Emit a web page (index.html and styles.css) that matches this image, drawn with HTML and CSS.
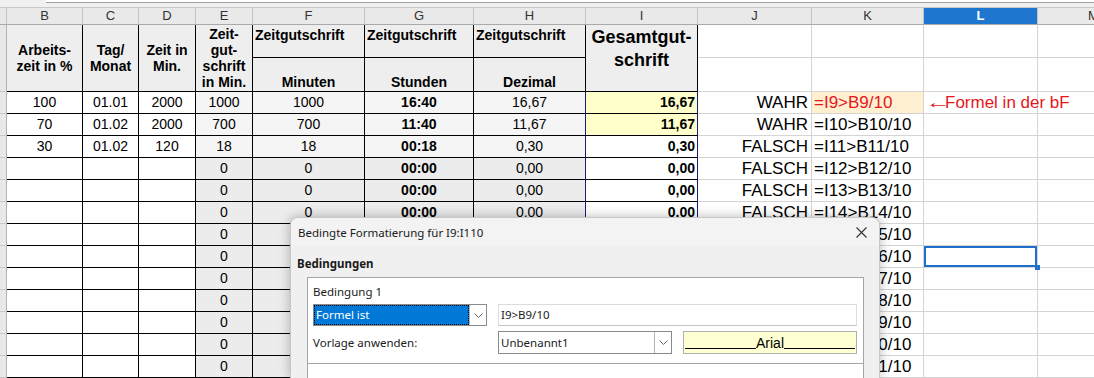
FILE: index.html
```html
<!DOCTYPE html>
<html lang="de">
  <head>
    <meta charset="UTF-8" />
    <title>Zeitgutschrift - Bedingte Formatierung</title>
    <link rel="stylesheet" href="styles.css">
  </head>
  <body>
    <div class="topbar"><div class="field"></div></div>

    <div class="sheet">
      <!-- Column letters -->
      <div class="colhead">
        <div class="rh"></div>
        <div>B</div><div>C</div><div>D</div><div>E</div><div>F</div><div>G</div>
        <div>H</div><div>I</div><div>J</div><div>K</div><div class="active">L</div><div>M</div>
      </div>

      <!-- Table header (two rows) -->
      <div class="head">
        <div class="rh span"></div>
        <div class="hc span mid">Arbeits-<br>zeit in %</div>
        <div class="hc span mid">Tag/<br>Monat</div>
        <div class="hc span mid">Zeit in<br>Min.</div>
        <div class="hc span mid">Zeit-<br>gut-<br>schrift<br>in Min.</div>
        <div class="hc top">Zeitgutschrift</div>
        <div class="hc top">Zeitgutschrift</div>
        <div class="hc top">Zeitgutschrift</div>
        <div class="hc span big">Gesamtgut-<br>schrift</div>
        <div class="gc"></div><div class="gc"></div><div class="gc"></div><div class="gc"></div>
        <div class="hc bottom">Minuten</div>
        <div class="hc bottom">Stunden</div>
        <div class="hc bottom">Dezimal</div>
        <div class="gc"></div><div class="gc"></div><div class="gc"></div><div class="gc"></div>
      </div>

      <!-- Data rows 9..21 -->
      <div class="row hi">
        <div class="rh"></div><div>100</div><div>01.01</div><div>2000</div>
        <div class="gs">1000</div><div class="gs">1000</div><div class="gs b">16:40</div><div class="gs hx">16,67</div>
        <div class="tot">16,67</div><div class="j">WAHR</div><div class="k mark">=I9&gt;B9/10</div>
        <div class="l note"><span class="arrow-l">&larr;</span>Formel in der bF</div><div class="m"></div>
      </div>
      <div class="row hi">
        <div class="rh"></div><div>70</div><div>01.02</div><div>2000</div>
        <div class="gs">700</div><div class="gs">700</div><div class="gs b">11:40</div><div class="gs hx">11,67</div>
        <div class="tot">11,67</div><div class="j">WAHR</div><div class="k">=I10&gt;B10/10</div>
        <div class="l"></div><div class="m"></div>
      </div>
      <div class="row">
        <div class="rh"></div><div>30</div><div>01.02</div><div>120</div>
        <div class="gs">18</div><div class="gs">18</div><div class="gs b">00:18</div><div class="gs hx">0,30</div>
        <div class="tot">0,30</div><div class="j">FALSCH</div><div class="k">=I11&gt;B11/10</div>
        <div class="l"></div><div class="m"></div>
      </div>
      <div class="row low">
        <div class="rh"></div><div></div><div></div><div></div>
        <div class="gs">0</div><div class="gs">0</div><div class="gs b">00:00</div><div class="gs hx">0,00</div>
        <div class="tot">0,00</div><div class="j">FALSCH</div><div class="k">=I12&gt;B12/10</div>
        <div class="l"></div><div class="m"></div>
      </div>
      <div class="row low">
        <div class="rh"></div><div></div><div></div><div></div>
        <div class="gs">0</div><div class="gs">0</div><div class="gs b">00:00</div><div class="gs hx">0,00</div>
        <div class="tot">0,00</div><div class="j">FALSCH</div><div class="k">=I13&gt;B13/10</div>
        <div class="l"></div><div class="m"></div>
      </div>
      <div class="row low">
        <div class="rh"></div><div></div><div></div><div></div>
        <div class="gs">0</div><div class="gs">0</div><div class="gs b">00:00</div><div class="gs hx">0,00</div>
        <div class="tot">0,00</div><div class="j">FALSCH</div><div class="k">=I14&gt;B14/10</div>
        <div class="l"></div><div class="m"></div>
      </div>
      <div class="row low">
        <div class="rh"></div><div></div><div></div><div></div>
        <div class="gs">0</div><div class="gs">0</div><div class="gs b">00:00</div><div class="gs hx">0,00</div>
        <div class="tot">0,00</div><div class="j">FALSCH</div><div class="k">=I15&gt;B15/10</div>
        <div class="l"></div><div class="m"></div>
      </div>
      <div class="row low">
        <div class="rh"></div><div></div><div></div><div></div>
        <div class="gs">0</div><div class="gs">0</div><div class="gs b">00:00</div><div class="gs hx">0,00</div>
        <div class="tot">0,00</div><div class="j">FALSCH</div><div class="k">=I16&gt;B16/10</div>
        <div class="l sel"></div><div class="m"></div>
      </div>
      <div class="row low">
        <div class="rh"></div><div></div><div></div><div></div>
        <div class="gs">0</div><div class="gs">0</div><div class="gs b">00:00</div><div class="gs hx">0,00</div>
        <div class="tot">0,00</div><div class="j">FALSCH</div><div class="k">=I17&gt;B17/10</div>
        <div class="l"></div><div class="m"></div>
      </div>
      <div class="row low">
        <div class="rh"></div><div></div><div></div><div></div>
        <div class="gs">0</div><div class="gs">0</div><div class="gs b">00:00</div><div class="gs hx">0,00</div>
        <div class="tot">0,00</div><div class="j">FALSCH</div><div class="k">=I18&gt;B18/10</div>
        <div class="l"></div><div class="m"></div>
      </div>
      <div class="row low">
        <div class="rh"></div><div></div><div></div><div></div>
        <div class="gs">0</div><div class="gs">0</div><div class="gs b">00:00</div><div class="gs hx">0,00</div>
        <div class="tot">0,00</div><div class="j">FALSCH</div><div class="k">=I19&gt;B19/10</div>
        <div class="l"></div><div class="m"></div>
      </div>
      <div class="row low">
        <div class="rh"></div><div></div><div></div><div></div>
        <div class="gs">0</div><div class="gs">0</div><div class="gs b">00:00</div><div class="gs hx">0,00</div>
        <div class="tot">0,00</div><div class="j">FALSCH</div><div class="k">=I20&gt;B20/10</div>
        <div class="l"></div><div class="m"></div>
      </div>
      <div class="row low">
        <div class="rh"></div><div></div><div></div><div></div>
        <div class="gs">0</div><div class="gs">0</div><div class="gs b">00:00</div><div class="gs hx">0,00</div>
        <div class="tot">0,00</div><div class="j">FALSCH</div><div class="k">=I21&gt;B21/10</div>
        <div class="l"></div><div class="m"></div>
      </div>
    </div>

    <!-- Dialog: Bedingte Formatierung -->
    <div class="dialog">
      <div class="dialog-title">
        <span>Bedingte Formatierung für I9:I110</span>
        <svg class="close" width="11" height="11" viewBox="0 0 11 11">
          <path d="M0.5 0.5 L10.5 10.5 M10.5 0.5 L0.5 10.5" stroke="#333" stroke-width="1.1" fill="none" />
        </svg>
      </div>
      <div class="dialog-body">
        <h3>Bedingungen</h3>
        <div class="panel">
          <div class="condition">
            <p class="cond-name">Bedingung 1</p>
            <div class="cond-grid">
              <div class="select focused">
                <span class="value">Formel ist</span>
                <span class="arrow">
                  <svg width="9" height="5" viewBox="0 0 9 5"><path d="M0.5 0.5 L4.5 4.5 L8.5 0.5" stroke="#666" fill="none" /></svg>
                </span>
              </div>
              <div class="text-input">I9&gt;B9/10</div>

              <span class="label">Vorlage anwenden:</span>
              <div class="select style-select">
                <span class="value">Unbenannt1</span>
                <span class="arrow">
                  <svg width="9" height="5" viewBox="0 0 9 5"><path d="M0.5 0.5 L4.5 4.5 L8.5 0.5" stroke="#666" fill="none" /></svg>
                </span>
              </div>
              <div class="preview">
                <span class="rule"></span><span class="sample">Arial</span><span class="rule"></span>
              </div>
            </div>
          </div>
        </div>
      </div>
    </div>
  </body>
</html>
```

FILE: styles.css
```css
body {
  margin: 0;
  height: 378px;
  overflow: hidden;
  position: relative;
  background-color: #fff;
  font-family: "Liberation Sans", Arial, sans-serif;
  color: #000;
}

/* formula bar remnant at the very top */
.topbar {
  height: 7px;
  padding-left: 46px;
  background-color: #f0f0f0;
  box-sizing: border-box;
}

.topbar .field {
  height: 2px;
  background-color: #fff;
  border-bottom: 1px solid #a0a0a0;
}

.sheet {
  --cols: 7px 76px 56px 57px 57px 112px 109px 112px 112px 114px 112px 114px 112px;
}

.colhead,
.head,
.row {
  display: grid;
  grid-template-columns: var(--cols);
  width: 1150px;
}

/* column letters */
.colhead {
  height: 18px;
  background-color: #e9e9e9;
  border-top: 1px solid #c9c9c9;
  box-sizing: border-box;
}

.colhead > div {
  border-right: 1px solid #c3c3c3;
  border-bottom: 1px solid #a9a9a9;
  font-size: 13px;
  line-height: 16px;
  text-align: center;
  color: #333;
}

.colhead > .active {
  background-color: #1f76cf;
  color: #fff;
  font-weight: bold;
}

/* table header */
.head {
  grid-template-rows: 33px 34px;
}

.head > div {
  box-sizing: border-box;
}

.head .span {
  grid-row: span 2;
}

.rh {
  background-color: #e8e8e8;
  border-right: 1px solid #b4b4b4;
  border-bottom: 1px solid #c8c8c8;
  box-sizing: border-box;
}

.hc {
  background-color: #eeeeee;
  border-right: 1px solid #000;
  border-bottom: 1px solid #000;
  font-weight: bold;
  font-size: 14px;
  line-height: 16px;
  display: flex;
  flex-direction: column;
  text-align: center;
}

.hc.mid {
  justify-content: center;
}

.hc.top {
  padding: 2px 0 0 2px;
  text-align: left;
}

.hc.bottom {
  justify-content: flex-end;
  padding-bottom: 1px;
}

.hc.big {
  font-size: 18px;
  line-height: 23px;
  padding-top: 1px;
}

.gc {
  border-right: 1px solid #d4d4d4;
  border-bottom: 1px solid #d4d4d4;
}

/* data rows */
.row {
  height: 22px;
}

.row > div {
  box-sizing: border-box;
  border-right: 1px solid #000;
  border-bottom: 1px solid #000;
  font-size: 14px;
  line-height: 21px;
  text-align: center;
  white-space: nowrap;
  overflow: hidden;
}

.row > .rh {
  border-right-color: #b4b4b4;
  border-bottom-color: #c8c8c8;
}

.row > .gs {
  background-color: #f5f5f5;
}

.row.low > .gs {
  background-color: #ececec;
}

.row > .b {
  font-weight: bold;
}

.row > .hx {
  border-right-color: #1c1c78;
}

.row > .tot {
  border-right-color: #1c1c78;
  text-align: right;
  padding-right: 2px;
  font-weight: bold;
}

.row.hi > .tot {
  background-color: #ffffcc;
}

.row > .j,
.row > .k,
.row > .l,
.row > .m {
  border-right-color: #d4d4d4;
  border-bottom-color: #d4d4d4;
  font-size: 17px;
}

.row > .j {
  text-align: right;
  padding-right: 3px;
}

.row > .k,
.row > .l {
  text-align: left;
  padding-left: 2px;
  overflow: visible;
}

.row > .mark {
  background-color: #fff0d2;
  color: #e5171c;
}

.row > .note {
  color: #e5171c;
}

.arrow-l {
  display: inline-block;
  width: 19px;
  transform: scaleX(1.45);
  transform-origin: left center;
}

.row > .sel {
  position: relative;
  box-shadow: inset 0 0 0 2px #1f6fcc;
  overflow: visible;
}

.row > .sel::after {
  content: "";
  position: absolute;
  right: -3px;
  bottom: -3px;
  width: 5px;
  height: 5px;
  background-color: #1f6fcc;
}

/* dialog */
.dialog {
  position: absolute;
  left: 290px;
  top: 217px;
  width: 590px;
  height: 161px;
  overflow: hidden;
  box-sizing: border-box;
  background-color: #f0f0f0;
  border: 1px solid #c8c8c8;
  border-bottom: none;
  border-radius: 8px 8px 0 0;
  box-shadow: 0 0 12px rgba(0, 0, 0, 0.28);
  font-family: "Noto Sans", "Open Sans", sans-serif;
  font-size: 11.5px;
  color: #1a1a1a;
}

.dialog-title {
  height: 28px;
  display: flex;
  align-items: center;
  justify-content: space-between;
  padding: 0 12px 0 7px;
  background-color: #f3f3f3;
}

.dialog-body {
  padding: 10px 15px 0 6px;
}

.dialog-body h3 {
  margin: 0 0 5px 0;
  font-size: 11.5px;
  line-height: 16px;
  font-weight: bold;
}

.panel {
  margin-left: 10px;
  height: 120px;
  background-color: #fff;
  border: 1px solid #a6a6a6;
  border-bottom: none;
}

.condition {
  padding: 6px 6px 0 5px;
  height: 86px;
  box-sizing: border-box;
  border-bottom: 1px solid #a6a6a6;
}

.cond-name {
  margin: 0 0 4px 0;
  line-height: 16px;
}

.cond-grid {
  display: grid;
  grid-template-columns: 174px 11px 174px 11px 174px;
  grid-template-rows: 22px 23px;
  row-gap: 5px;
}

.select {
  display: flex;
  border: 1px solid #8a8a8a;
  box-sizing: border-box;
  background-color: #fff;
}

.select .value {
  flex: 1;
  padding-left: 2px;
  line-height: 20px;
}

.select.focused .value {
  background-color: #0078d7;
  color: #fff;
  outline: 1px dotted #000;
  outline-offset: -1px;
}

.select .arrow {
  width: 16px;
  border-left: 1px solid #b4b4b4;
  display: flex;
  align-items: center;
  justify-content: center;
}

.text-input {
  grid-column: 3 / 6;
  border: 1px solid #dcdcdc;
  border-bottom-color: #c4c4c4;
  padding-left: 2px;
  line-height: 20px;
}

.label {
  grid-column: 1 / 3;
  line-height: 23px;
}

.style-select {
  grid-column: 3;
}

.style-select .value {
  line-height: 21px;
}

.preview {
  grid-column: 5;
  display: flex;
  align-items: center;
  background-color: #ffffd4;
  border: 1px solid #b0b0b0;
  box-sizing: border-box;
  padding: 0 1px;
}

.preview .rule {
  flex: 1;
  height: 1px;
  margin-top: 11px;
  background-color: #000;
}

.preview .sample {
  font-family: "Liberation Sans", Arial, sans-serif;
  font-size: 14px;
  color: #000;
}
```
